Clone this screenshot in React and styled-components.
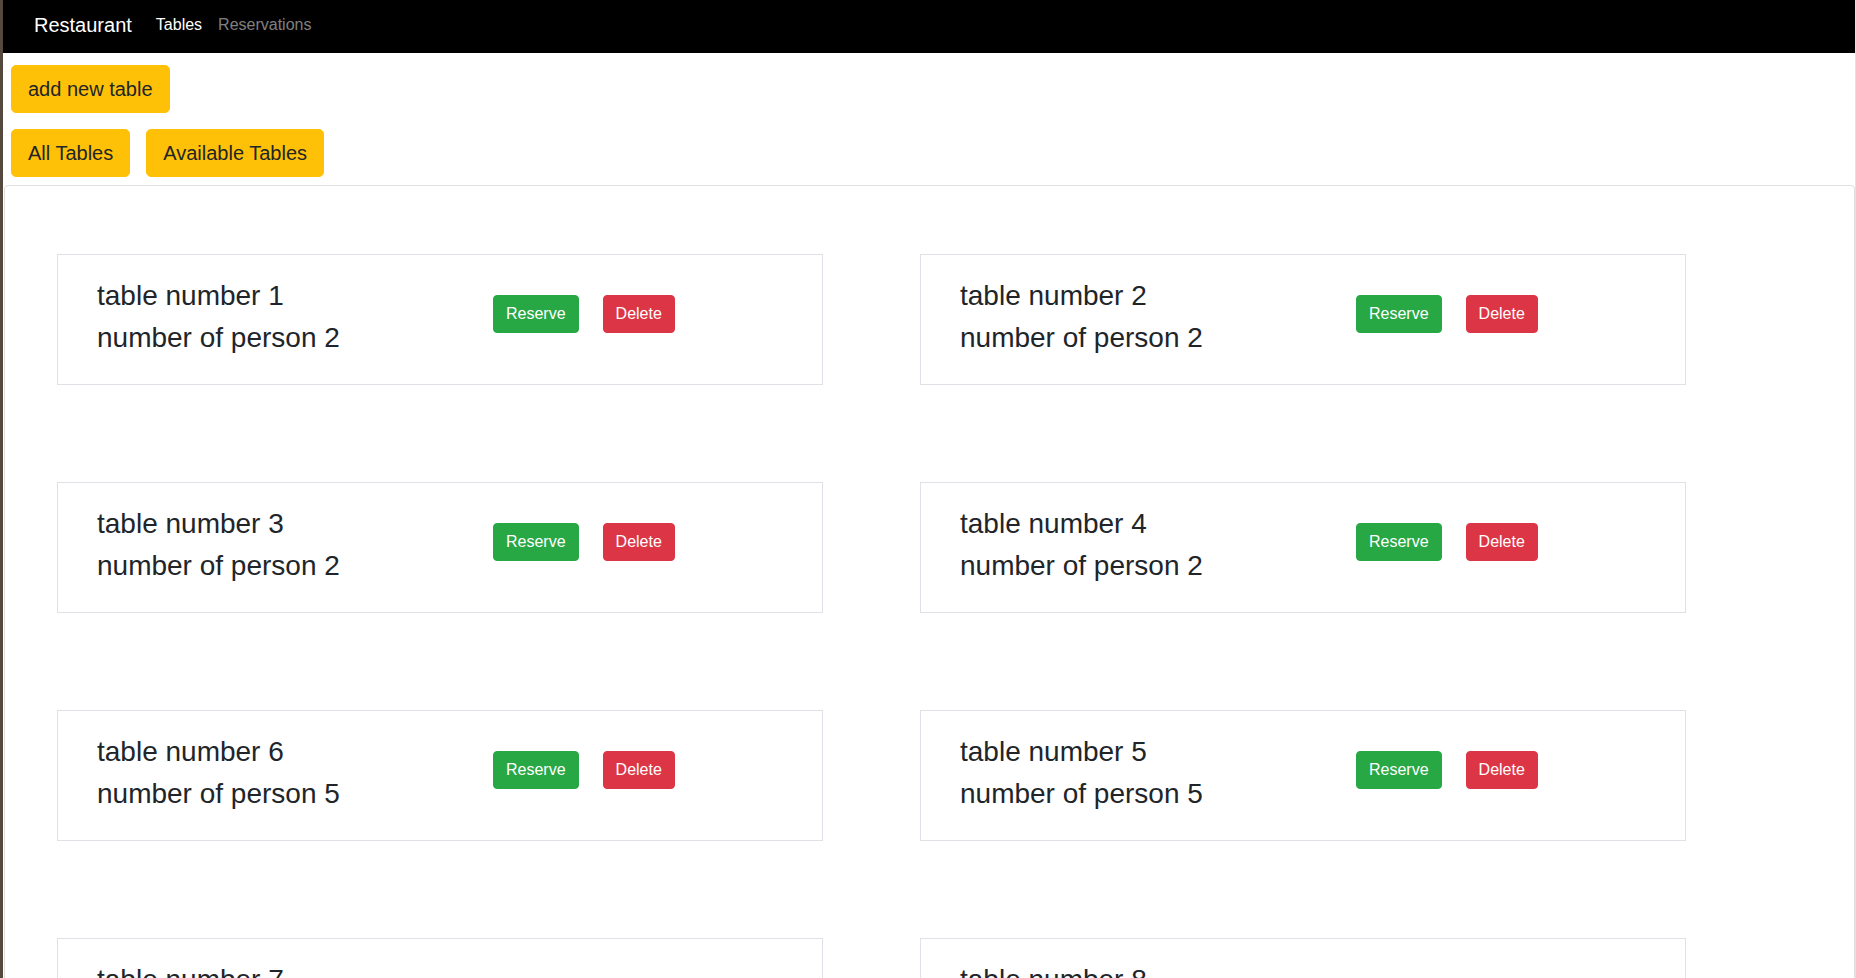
import styled, { createGlobalStyle } from "styled-components";

const tables = [
  { number: 1, persons: 2 },
  { number: 2, persons: 2 },
  { number: 3, persons: 2 },
  { number: 4, persons: 2 },
  { number: 6, persons: 5 },
  { number: 5, persons: 5 },
  { number: 7, persons: 4 },
  { number: 8, persons: 4 },
];

export default function App() {
  return (
    <>
      <GlobalStyle />
      <Page>
        <Navbar>
          <Brand>Restaurant</Brand>
          <NavLink $active>Tables</NavLink>
          <NavLink>Reservations</NavLink>
        </Navbar>
        <Toolbar>
          <WarningBtn>add new table</WarningBtn>
        </Toolbar>
        <FilterRow>
          <WarningBtn>All Tables</WarningBtn>
          <WarningBtn>Available Tables</WarningBtn>
        </FilterRow>
        <ListCard>
          <TableGrid>
            {tables.map((t) => (
              <TableCard key={t.number}>
                <Info>
                  <Title>table number {t.number}</Title>
                  <Title>number of person {t.persons}</Title>
                </Info>
                <Actions>
                  <SmallBtn $color="#28a745">Reserve</SmallBtn>
                  <SmallBtn $color="#dc3545">Delete</SmallBtn>
                </Actions>
              </TableCard>
            ))}
          </TableGrid>
        </ListCard>
      </Page>
    </>
  );
}

const GlobalStyle = createGlobalStyle`
  html, body {
    margin: 0;
    padding: 0;
    background: #fff;
    overflow: hidden;
  }
  body {
    font-family: "Liberation Sans", Arial, sans-serif;
    color: #212529;
  }
  * {
    box-sizing: border-box;
  }
`;
const Page = styled.div`
  min-height: 978px;
  border-left: 3px solid #55493d;
  border-right: 1px solid #e2e2e2;
  background: #fff;
`;
const Navbar = styled.nav`
  height: 53px;
  background: #000;
  display: flex;
  align-items: center;
  padding: 0 0 4px 31px;
`;
const Brand = styled.a`
  font-size: 20px;
  color: #fff;
  margin-right: 16px;
  line-height: 30px;
`;
const NavLink = styled.a`
  font-size: 16px;
  padding: 0 8px;
  line-height: 24px;
  color: ${(p) => (p.$active ? "#fff" : "rgba(255,255,255,0.5)")};
`;
const Toolbar = styled.div`
  padding: 12px 0 0 8px;
`;
const FilterRow = styled.div`
  display: flex;
  gap: 16px;
  padding: 16px 0 8px 8px;
`;
const WarningBtn = styled.button`
  font-family: inherit;
  font-size: 20px;
  line-height: 30px;
  padding: 8px 16px;
  border: 1px solid #ffc107;
  border-radius: 5px;
  background: #ffc107;
  color: #212529;
  cursor: pointer;
`;
const ListCard = styled.div`
  margin-left: 1px;
  border: 1px solid #dfdfdf;
  border-radius: 4px;
  padding: 68px 0 40px 52px;
`;
const TableGrid = styled.div`
  display: grid;
  grid-template-columns: 766px 766px;
  column-gap: 97px;
  row-gap: 97px;
`;
const TableCard = styled.div`
  display: flex;
  align-items: flex-start;
  height: 131px;
  border: 1px solid #dee2e6;
  padding: 24px 0 0 39px;
`;
const Info = styled.div`
  width: 396px;
`;
const Title = styled.h3`
  margin: 0 0 8px;
  font-size: 28px;
  font-weight: 400;
  line-height: 1.2;
  color: #212529;
`;
const Actions = styled.div`
  display: flex;
  gap: 24px;
  padding-top: 16px;
`;
const SmallBtn = styled.button`
  font-family: inherit;
  font-size: 16px;
  line-height: 24px;
  padding: 6px 12px;
  border: 1px solid ${(p) => p.$color};
  border-radius: 4px;
  background: ${(p) => p.$color};
  color: #fff;
  cursor: pointer;
`;
